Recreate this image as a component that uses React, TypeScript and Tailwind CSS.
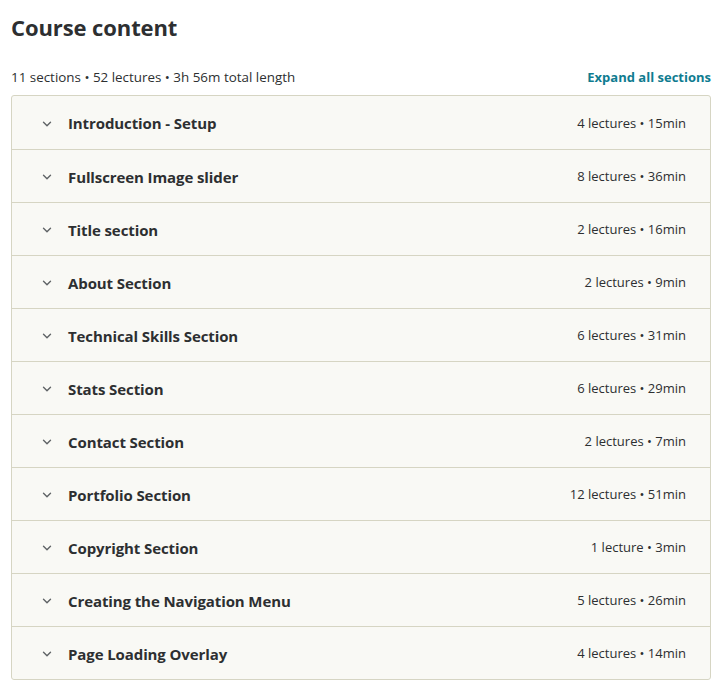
import { ChevronDown } from "lucide-react";

const sections = [
  { title: "Introduction - Setup", meta: "4 lectures • 15min" },
  { title: "Fullscreen Image slider", meta: "8 lectures • 36min" },
  { title: "Title section", meta: "2 lectures • 16min" },
  { title: "About Section", meta: "2 lectures • 9min" },
  { title: "Technical Skills Section", meta: "6 lectures • 31min" },
  { title: "Stats Section", meta: "6 lectures • 29min" },
  { title: "Contact Section", meta: "2 lectures • 7min" },
  { title: "Portfolio Section", meta: "12 lectures • 51min" },
  { title: "Copyright Section", meta: "1 lecture • 3min" },
  { title: "Creating the Navigation Menu", meta: "5 lectures • 26min" },
  { title: "Page Loading Overlay", meta: "4 lectures • 14min" },
];

export default function App() {
  return (
    <div className="w-[721px] bg-white pl-[11px] pr-[10px] text-[#2d2f31] font-['Open_Sans',sans-serif]">
      {/* heading */}
      <h2 className="pt-[11px] text-[22px] font-bold leading-[32px] tracking-[-0.1px]">Course content</h2>

      {/* summary line */}
      <div className="mt-[25px] flex items-center justify-between">
        <span className="text-[13.4px] leading-[18px]">11 sections • 52 lectures • 3h 56m total length</span>
        <button className="text-[13px] font-bold leading-[18px] text-[#0f7c90]">Expand all sections</button>
      </div>

      {/* accordion */}
      <div className="mt-[9px] rounded-[3px] border border-[#d6d5c3] bg-[#f9f9f5]">
        {sections.map((s, i) => (
          <div
            key={s.title}
            className={`flex h-[53px] items-center pt-[2px] pl-[28px] pr-[24px] ${i > 0 ? "border-t border-[#d6d5c3]" : ""}`}
          >
            <ChevronDown className="h-[14px] w-[14px] text-[#5f6366]" strokeWidth={2.4} />
            <span className="ml-[14px] flex-1 text-[15px] font-bold tracking-[-0.1px]">{s.title}</span>
            <span className="text-[13px]">{s.meta}</span>
          </div>
        ))}
      </div>
    </div>
  );
}
